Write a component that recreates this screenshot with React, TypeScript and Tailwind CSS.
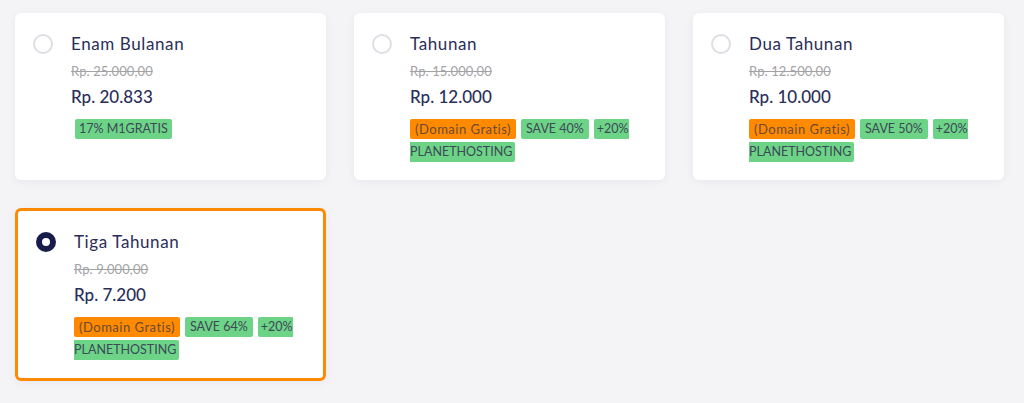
import React from "react";

interface Plan {
  name: string;
  oldPrice: string;
  price: string;
  domain: boolean;
  save?: string;
  extra?: string;
  selected?: boolean;
}

const plans: Plan[] = [
  { name: "Enam Bulanan", oldPrice: "Rp. 25.000,00", price: "Rp. 20.833", domain: false, extra: "17% M1GRATIS" },
  { name: "Tahunan", oldPrice: "Rp. 15.000,00", price: "Rp. 12.000", domain: true, save: "SAVE 40%" },
  { name: "Dua Tahunan", oldPrice: "Rp. 12.500,00", price: "Rp. 10.000", domain: true, save: "SAVE 50%" },
  { name: "Tiga Tahunan", oldPrice: "Rp. 9.000,00", price: "Rp. 7.200", domain: true, save: "SAVE 64%", selected: true },
];

function Radio({ checked }: { checked?: boolean }) {
  if (checked) {
    return <span className="block w-5 h-5 rounded-full border-[6px] border-[#181c4a] bg-white shrink-0" />;
  }
  return <span className="block w-5 h-5 rounded-full border-2 border-[#dedfe5] bg-white shrink-0" />;
}

function PlanCard({ plan }: { plan: Plan }) {
  const green = "bg-[#6dd487] text-[#3c4957] text-[12.5px] h-5 leading-[20px] rounded-[2px]";
  return (
    <div
      className={
        "bg-white rounded-[6px] shadow-[0_2px_10px_rgba(20,20,60,0.05)] pl-[18px] pr-4 pt-[19px] pb-[18px] flex gap-[18px] " +
        (plan.selected ? "border-[3px] border-[#ff8a00] self-start" : "")
      }
    >
      <div className="pt-[2px]">
        <Radio checked={plan.selected} />
      </div>
      <div className="flex flex-col">
        <div className="text-[17px] leading-[24px] text-[#2a2e5a] tracking-[0.6px]">{plan.name}</div>
        <div className="mt-[5px] text-[13px] leading-[20px] text-[#a3a3a6] line-through tracking-[0.1px]">{plan.oldPrice}</div>
        <div className="mt-1 text-[17px] leading-[24px] font-medium text-[#2a2e5a]">{plan.price}</div>
        <div className="mt-[10px] flex flex-wrap gap-x-[5px]">
          {plan.extra && <span className={green + " ml-[4px] px-[4px]"}>{plan.extra}</span>}
          {plan.domain && (
            <span className="bg-[#ff8a00] text-[#6b4a35] text-[13px] tracking-[0.5px] h-5 leading-[20px] rounded-[2px] px-[5px]">
              (Domain Gratis)
            </span>
          )}
          {plan.save && <span className={green + " px-[5px]"}>{plan.save}</span>}
          {plan.domain && <span className={green + " pl-[3px] pr-0 rounded-r-none"}>+20%</span>}
          {plan.domain && <div className="basis-full h-[3px]" />}
          {plan.domain && <span className={green + " pr-[3px] rounded-l-none"}>PLANETHOSTING</span>}
        </div>
      </div>
    </div>
  );
}

export default function App() {
  return (
    <div className="min-h-[403px] bg-[#f4f4f7] px-[15px] pt-[13px] pb-4" style={{ fontFamily: "Lato, 'Liberation Sans', sans-serif" }}>
      <div className="grid grid-cols-3 gap-[28px] w-[989px]">
        {plans.map((p) => (
          <PlanCard key={p.name} plan={p} />
        ))}
      </div>
    </div>
  );
}
